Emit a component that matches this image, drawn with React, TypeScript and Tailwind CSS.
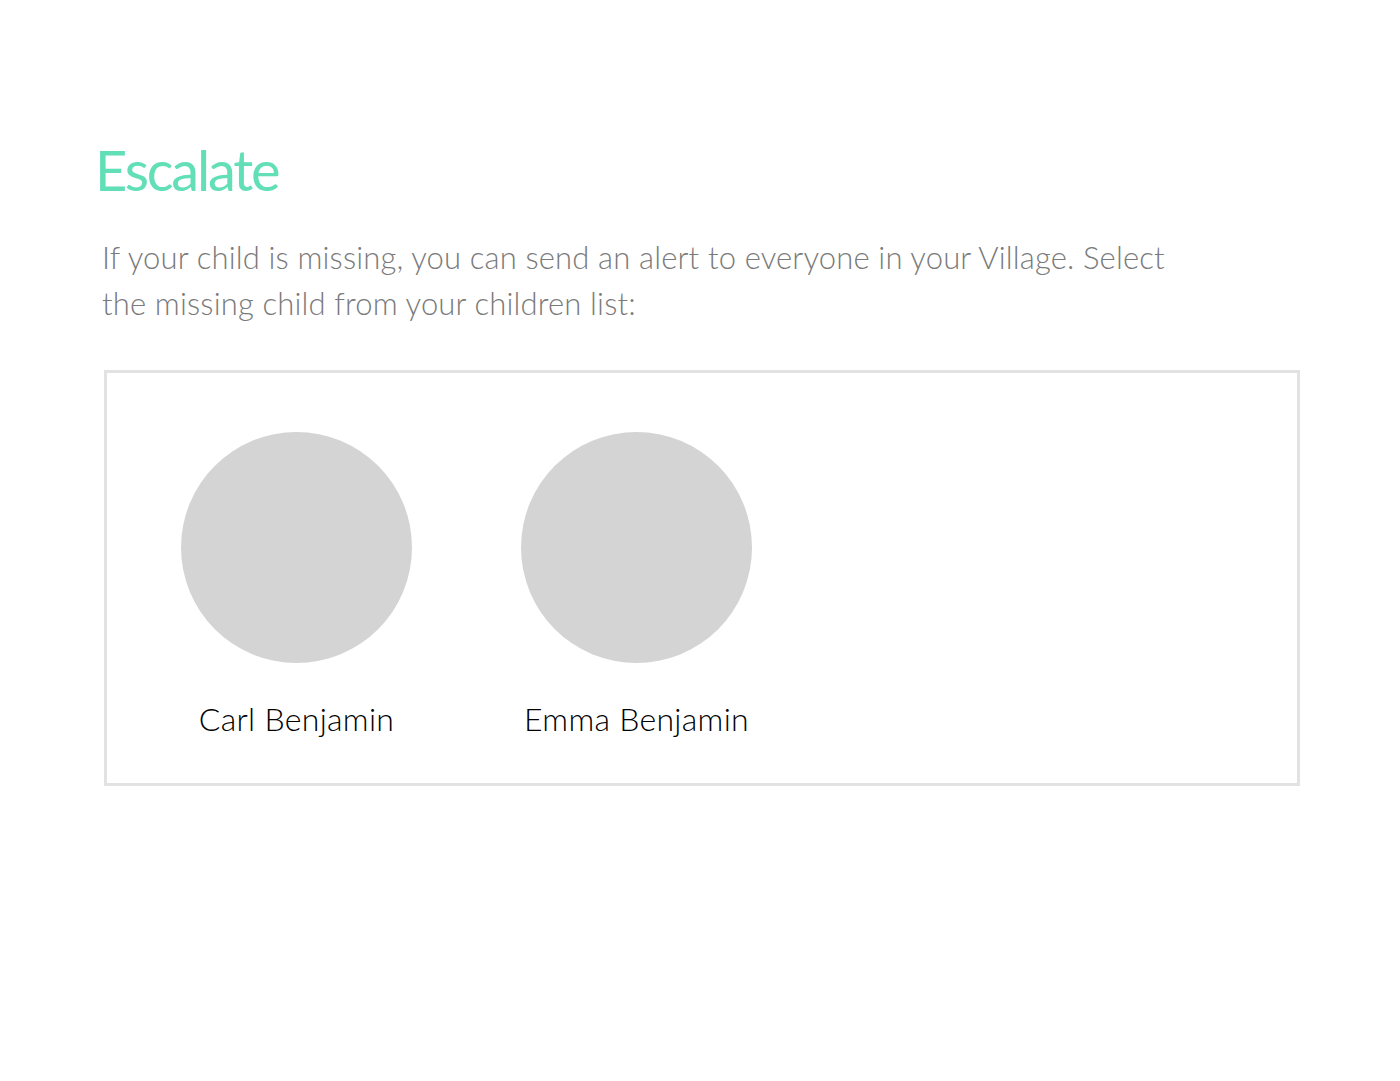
export default function App() {
  const kids = ["Carl Benjamin", "Emma Benjamin"];
  return (
    <div className="w-[1400px] h-[1081px] bg-white" style={{ fontFamily: "Lato, 'Open Sans', sans-serif" }}>
      <div className="pt-[138px] pl-[95px]">
        <h1 className="text-[56px] leading-[64px] font-normal text-[#62dfb6] tracking-[-2.2px]">Escalate</h1>
        <p className="mt-[32px] ml-[7px] w-[1100px] text-[31px] leading-[46px] font-light text-[#7a7a7a] tracking-[0.15px]">
          If your child is missing, you can send an alert to everyone in your Village. Select the missing child from your children list:
        </p>
        <div className="mt-[44px] ml-[9px] w-[1196px] h-[416px] border-[3px] border-[#e2e2e2] flex gap-[109px] pl-[74px] pt-[59px]">
          {kids.map((k) => (
            <div key={k} className="flex flex-col items-center w-[231px]">
              <div className="w-[231px] h-[231px] rounded-full bg-[#d4d4d4]" />
              <div className="mt-[36px] text-[32px] leading-[40px] font-light text-black whitespace-nowrap tracking-[0.3px]">{k}</div>
            </div>
          ))}
        </div>
      </div>
    </div>
  );
}
